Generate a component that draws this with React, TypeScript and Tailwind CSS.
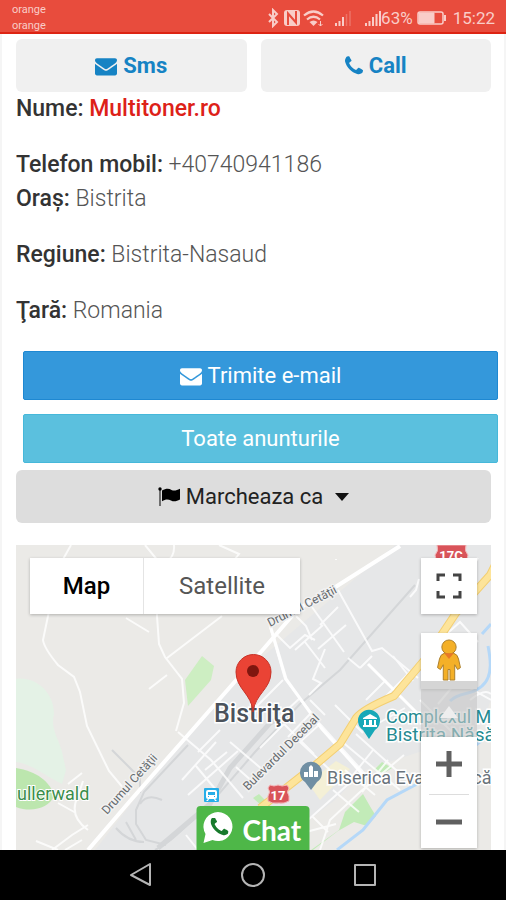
import type { ReactNode } from "react";

function EnvelopeIcon() {
  return (
    <svg viewBox="0 0 1792 1792" className="size-[22px] shrink-0" fill="currentColor" aria-hidden="true">
      <path d="M1792 710v794q0 66-47 113t-113 47h-1472q-66 0-113-47t-47-113v-794q44 49 101 87 362 246 497 345 57 42 92.5 65.5t94.5 48 110 24.5h2q51 0 110-24.5t94.5-48 92.5-65.5q170-123 498-345 57-39 100-87zm0-294q0 79-49 151t-122 123q-376 261-468 325-10 7-42.5 31t-54 38.5-52 32.5-57.5 27-50 9h-2q-23 0-50-9t-57.5-27-52-32.5-54-38.5-42.5-31q-91-64-262-182.5t-205-142.5q-62-42-117-115.5t-55-136.5q0-78 41.5-130t118.5-52h1472q65 0 112.5 47t47.5 113z" />
    </svg>
  );
}

const PHONE_PATH =
  "M1600 1240q0 27-10 70.5t-21 68.5q-21 50-122 106-94 51-186 51-27 0-53-3.5t-57.5-12.5-47-14.5-55.5-20.5-49-18q-98-35-175-83-127-79-264-216t-216-264q-48-77-83-175-3-9-18-49t-20.5-55.5-14.5-47-12.5-57.5-3.5-53q0-92 51-186 56-101 106-122 25-11 68.500-21t70.500-10q14 0 21 3 18 6 53 76 11 19 30 54t35 63.500 31 53.500q3 4 17.500 25t21.500 35.500 7 28.500q0 20-28.500 50t-62 55-62 53-28.500 46q0 9 5 22.500t8.500 20.500 14 24 11.500 19q76 137 174 235t235 174q2 1 19 11.500t24 14 20.500 8.500 22.500 5q18 0 46-28.500t53-62 55-62 50-28.500q14 0 28.500 7t35.500 21.500 25 17.500q25 15 53.500 31t63.500 35 54 30q70 35 76 53 3 7 3 21z";

function PhoneIcon() {
  return (
    <svg viewBox="192 0 1408 1792" className="h-6 w-[18px] shrink-0" fill="currentColor" aria-hidden="true">
      <path d={PHONE_PATH} />
    </svg>
  );
}

function FlagIcon() {
  return (
    <svg viewBox="0 0 22 22" className="size-[22px] shrink-0" fill="currentColor" aria-hidden="true">
      <circle cx="2" cy="3" r="1.700" />
      <path d="M1.500 3h1v17h-1z" />
      <path d="M4 4.500c4-2.400 7-2.300 9.500-.6 2.500 1.300 5 .6 8.500-1.200v10.800c-3.300 1.900-6.300 2.500-9 1-3-1.600-5.500-1.400-9 .7z" />
    </svg>
  );
}

function StatusBar() {
  return (
    <header className="flex h-[34px] items-center justify-between border-b-2 border-[#dd2413] bg-[#e84c3d] pr-[11px] pl-3 text-[#f9cdc8]">
      <div className="flex flex-col pt-1 text-[11px] leading-4">
        <span>orange</span>
        <span>orange</span>
      </div>
      <div className="flex items-center pt-1">
        <svg viewBox="0 0 114 20" className="h-5 w-[114px]" fill="none" stroke="currentColor" aria-hidden="true">
          <path d="M2 6l8 8-4 4V2l4 4-8 8" strokeWidth="2" />
          <rect x="17" y="2" width="16" height="16" rx="3" fill="currentColor" stroke="none" />
          <path d="M21 17V5.500l8 9V3" stroke="#e84c3d" strokeWidth="2" />
          <path d="M37 7.500q9.500-8 19 0M40 11.500q6.500-5.500 13 0" strokeWidth="2.200" />
          <path d="M42.500 14q4-3 8 0l-4 4z" fill="currentColor" stroke="none" />
          <path d="M53.500 13v5m-2-2l2 2 2-2" strokeWidth="1" />
          <path d="M69 18v-3M72.500 18v-5M76 18V9" strokeWidth="2" />
          <path d="M79.500 18V6M83 18V3" strokeWidth="1.500" opacity=".3" />
          <path d="M99 18v-3M102.500 18v-5M106 18V9M109.500 18V6M113 18V3" strokeWidth="2" />
        </svg>
        <span className="text-[17px] leading-5">63%</span>
        <svg viewBox="0 0 30 14" className="mr-1.5 ml-1 h-3.5 w-[30px]" fill="none" stroke="currentColor" aria-hidden="true">
          <rect x="1" y="1" width="25" height="12" rx="2" strokeWidth="1.500" />
          <path d="M2 2h15v10H2z" fill="currentColor" />
          <path d="M28 4v6" strokeWidth="2" />
        </svg>
        <time className="text-[17px] leading-5">15:22</time>
      </div>
    </header>
  );
}

function Field({ label, children }: { label: string; children: ReactNode }) {
  return (
    <div>
      <dt className="inline font-medium text-[#333333]">{label}:</dt>{" "}
      <dd className="inline">{children}</dd>
    </div>
  );
}

function MapDrawing() {
  return (
    <svg
      viewBox="16 545 475 305"
      preserveAspectRatio="xMidYMid slice"
      className="absolute inset-0 size-full font-['Roboto','Noto_Sans',sans-serif]"
      role="img"
      aria-label="Bistriţa"
    >
      <path d="M16 545h475v305H16z" fill="#ebeae7" />
      <path d="M95 850L185 735 235 680 395 545H491V700L455 790 330 850z" fill="#e6e7e8" />
      <path d="M270 850l65-50 30-30 60-20 66 20v80z" fill="#ebeae7" />
      <path d="M16 679c18-3 38 12 38 35-4 15 5 25 8 38l4 18-4 14c-20-10-30-20-46-22z" fill="#e4f2e6" />
      <path d="M16 768c20 3 35 14 38 28-5 12-22 17-38 11z" fill="#bce6ae" />
      <path d="M185 680l17-24 12 10-3 14-23 26z" fill="#cdeec2" />
      <path d="M311 850l28-20 6-18 18-18 8 14 5 8-9 10-13-4-16 9-25 19zM374 770l8-8 10 6-8 5zM253 798l6-4 8 8-5 4z" fill="#c2ebb8" />
      <path d="M308 783l28-22 14 8-30 31z" fill="#f4f0d6" />

      <g fill="none" stroke="#d4d6d8">
        <path d="M155 850c20-10 28-23 50-40l50-58 45-48 40-34 75-85" strokeWidth="2" />
        <path d="M158 848l52-44 20-36 40-45 20-10" strokeWidth="5" />
        <path d="M188 745l-44 47-8 18v14l10 16 20 5M112 750l28 28v15M162 800q-15-7-22 4M126 822l10 18M116 828q12 14 28 14" strokeWidth="2" />
      </g>

      <g fill="none" stroke="#ffffff" strokeWidth="2" strokeOpacity=".8">
        <path d="M71 545l-9 16-14 55-5 24q1 8 15 25l16 12 6 15 7 34 22 45 20 24" />
        <path d="M145 545l14 17-2 54 2 28 6 13 17 22 2 24-8 28M174 545q1 12-8 17M126 618l23 14M222 616l-55 42M149 689l18-14M219 545l20 9-8 10" />
        <path d="M52 850l20-15 16-10M36 841l22 9M88 830q-20-14-10-34l5-15M58 803l18 10M68 784l14-11M65 850l17-10" />
        <path d="M178 732l33 28 32 38M198 752l22-22M182 780l34-38M196 766l20 24M205 770l22-18M188 795l50-44" />
        <path d="M270 627l15 52 35 45 45 50M276 634l14 14 15-13 10 5M312 640l-6-14-10-10M295 650l28-25M305 642l20 26M312 607l32 45M336 559v1M320 625l18-18M346 625l-28 24M325 649l-12 30 8 4-12 12" />
        <path d="M338 590l34 61 10-3 36 30M348 658l12 10M360 668l12-12M393 656l20 25M411 671l-25 25M283 680l-30 30M300 698l-25 23M312 712l-24 25M386 680l-20 20M370 728l35-20M419 579l-3 11-6 7" />
        <path d="M230 742l33 28-10 12-17-15M260 748l24-24M284 724l30 30M320 724l-20 18 30 28M325 715l-15-15M335 705l28 28" />
        <path d="M320 850l10-30 30-28 44-37M308 820l45-40M340 740l60 50M356 734l50 45M345 770l30 25M333 790l26 22M306 832l30-8M312 816l16 16M373 750l-24 30M388 760l-26 32" />
        <path d="M440 640l20-18 18 20M455 680l36 20M438 704l25-30M420 700l40 40 31-5M464 582q8-14 14-24M470 700q15-12 21-6M186 835l12 15" />
      </g>
      <g fill="none" stroke="#ffffff">
        <path d="M88 850l42-49 72-82 58-66 38-44 39-23 63-40" strokeWidth="4" />
        <path d="M270 625l16 54 36 50 43 48M368 664l60 60" strokeWidth="3" />
      </g>

      <path d="M337 850l26-20 24-30 60-32 44-35M450 701c10-10 22-5 32-15 12-10 8-30 6-40M482 634l9-10" fill="none" stroke="#b5d8f8" strokeWidth="3" />
      <g fill="none" strokeLinejoin="round">
        <path d="M260 808l26-20 28-22 26-22 16-26q7-9 38-22l32-38 30-45 34-38 5-10" stroke="#f3cf72" strokeWidth="8" />
        <path d="M260 808l26-20 28-22 26-22 16-26q7-9 38-22l32-38 30-45 34-38 5-10" stroke="#fde49a" strokeWidth="6" />
      </g>

      <g fill="#656a6d" stroke="#f1f1f1" strokeWidth="3" paintOrder="stroke" fontSize="12">
        <text transform="translate(107 815) rotate(-48)">Drumul Cetăţii</text>
        <text transform="translate(270 627) rotate(-27)">Drumul Cetăţii</text>
        <text transform="translate(248 791) rotate(-45)">Bulevardul Decebal</text>
      </g>
      <text x="17" y="800" fontSize="18" fill="#3b8d4b" stroke="#ffffff" strokeWidth="2" paintOrder="stroke">ullerwald</text>

      <g stroke="#ffffff" strokeWidth="3" paintOrder="stroke" fontSize="18">
        <text x="386" y="723" fill="#258a91">Complexul Muzeal</text>
        <text x="386" y="741" fontSize="19" fill="#258a91">Bistrita Năsăud</text>
        <text x="327" y="784" fill="#69737b">Biserica Evanghelică</text>
      </g>

      <path d="M369 739l-6-9a11 11 0 1 1 12 0z" fill="#17a8b8" />
      <path d="M363 718l7-4 7 4v1h-14zm1 2h2v5h-2zm5 0h3v5h-3zm5 0h2v5h-2zm-11 5h14v2h-14z" fill="#ffffff" />
      <path d="M311 790l-6-8a11 11 0 1 1 12 0z" fill="#708fa3" />
      <path d="M304 772h4v5h-4zm5-5l2-2 2 2v10h-4zm5 4h4v6h-4z" fill="#ffffff" />
      <rect x="204" y="788" width="15" height="14" rx="1" fill="#27aee8" />
      <path d="M208 790h7q2 0 2 2v5q0 2-2 2l2 2h-2l-1-2h-5l-1 2h-2l2-2q-2 0-2-2v-5q0-2 2-2z" fill="#ffffff" />
      <path d="M208 792h7v3h-7zm0 4h1v1h-1zm6 0h1v1h-1z" fill="#27aee8" />
      <g fill="#d9545a" stroke="#f3b6b8" strokeWidth="1">
        <path d="M270 785q4 2 8 0 4 2 9 0l2 3q-3 4 0 8v5q-5 3-10 2-7 1-11-2v-5q3-4 0-8z" />
        <path d="M437 545h29q-2 6 2 10l-2 8h-29l-2-8q4-4 2-10z" />
      </g>
      <g fill="#ffffff" fontWeight="700" fontSize="13" textAnchor="middle">
        <text x="278" y="800">17</text>
        <text x="451" y="560">17C</text>
      </g>
      <text x="214" y="722" fontSize="25" fontWeight="500" fill="#4b525b" stroke="#ffffff" strokeWidth="3" paintOrder="stroke">Bistriţa</text>
      <path d="M253 712c-1-18-17-23-17-40a17 17 0 0 1 35 0c0 17-16 22-18 40z" fill="#ea4335" stroke="#c73328" strokeWidth="1" />
      <circle cx="253" cy="671" r="6" fill="#7f160f" />
    </svg>
  );
}

function LocationMap() {
  return (
    <section className="relative mt-[22px] min-h-[305px] flex-1 overflow-hidden">
      <MapDrawing />
      <div className="absolute top-[13px] left-3.5 flex h-14 bg-white text-2xl shadow-[0_1px_3px_rgba(0,0,0,0.25)]">
        <button type="button" className="w-[114px] border-r border-[#e4e4e4] font-medium text-black">Map</button>
        <button type="button" className="w-[156px] text-[#565656]">Satellite</button>
      </div>
      <div className="absolute top-[13px] right-3.5 flex w-14 flex-col">
        <button type="button" aria-label="Fullscreen" className="flex h-14 items-center justify-center bg-white shadow-[0_1px_3px_rgba(0,0,0,0.25)]">
          <svg viewBox="0 0 26 26" className="size-[26px]" fill="none" stroke="#444444" strokeWidth="3" aria-hidden="true">
            <path d="M2 8V2h7M17 2h7v6M24 18v6h-7M9 24H2v-6" />
          </svg>
        </button>
        <button type="button" aria-label="Street View" className="mt-[19px] flex h-14 items-start justify-center border-b-8 border-[#d5d5d5] bg-white pt-1.5 shadow-[0_1px_3px_rgba(0,0,0,0.25)]">
          <svg viewBox="0 0 26 44" className="h-[42px] w-[26px]" fill="#f4b028" stroke="#a97c28" strokeWidth="1" aria-hidden="true">
            <path d="M8 15q-4 1-5 6l-2 9 3 2 3-5v16h5V32h2v11h5V27l3 5 3-2-2-9q-1-5-5-6z" />
            <circle cx="13" cy="8.500" r="7.500" />
            <path d="M8 15h10l-5 6z" fill="#e87928" stroke="none" />
          </svg>
        </button>
        <div className="flex h-12 items-center justify-center bg-[#c6c6c6]/60">
          <svg viewBox="0 0 24 24" className="size-6" fill="#eeeeee" aria-hidden="true">
            <path d="M12 5l9 12H3z" />
          </svg>
        </div>
        <div className="flex h-[111px] flex-col items-center bg-white shadow-[0_1px_3px_rgba(0,0,0,0.25)]">
          <button type="button" aria-label="Zoom in" className="flex w-full flex-1 items-center justify-center pb-1">
            <svg viewBox="0 0 26 26" className="size-[26px]" fill="none" stroke="#606060" strokeWidth="5" aria-hidden="true">
              <path d="M13 0v26M0 13h26" />
            </svg>
          </button>
          <span className="h-px w-10 bg-[#dddddd]" />
          <button type="button" aria-label="Zoom out" className="flex w-full flex-1 items-center justify-center">
            <svg viewBox="0 0 26 26" className="size-[26px]" fill="none" stroke="#606060" strokeWidth="5" aria-hidden="true">
              <path d="M0 13h26" />
            </svg>
          </button>
        </div>
      </div>
    </section>
  );
}

function ChatButton() {
  return (
    <a
      href="#chat"
      className="absolute bottom-0 left-1/2 flex h-11 w-[113px] -translate-x-1/2 items-center gap-2 rounded-t bg-[#4eb748] pt-1 pl-1.5 font-['Lato','Noto_Sans',sans-serif] text-[28px] leading-8 font-bold text-white"
    >
      <svg viewBox="0 0 32 32" className="mb-1 size-8 shrink-0" aria-hidden="true">
        <path d="M1 31l2-9a14.500 14.500 0 1 1 7 6z" fill="#ffffff" />
        <svg x="8" y="6" width="18" height="18" viewBox="192 256 1408 1280">
          <path d={PHONE_PATH} fill="#177a2c" />
        </svg>
      </svg>
      Chat
    </a>
  );
}

function SystemNav() {
  return (
    <nav className="flex h-[50px] items-center justify-center gap-[88px] bg-black text-[#b5b5b5]">
      <button type="button" aria-label="Back">
        <svg viewBox="0 0 24 24" className="size-6" fill="none" stroke="currentColor" strokeWidth="2" strokeLinejoin="round" aria-hidden="true">
          <path d="M21 1v21L2 12z" />
        </svg>
      </button>
      <button type="button" aria-label="Home">
        <svg viewBox="0 0 24 24" className="size-6" fill="none" stroke="currentColor" strokeWidth="2" aria-hidden="true">
          <circle cx="12" cy="12" r="11" />
        </svg>
      </button>
      <button type="button" aria-label="Recent apps">
        <svg viewBox="0 0 24 24" className="size-6" fill="none" stroke="currentColor" strokeWidth="2" strokeLinejoin="round" aria-hidden="true">
          <path d="M2 2h20v20H2z" />
        </svg>
      </button>
    </nav>
  );
}

export default function App() {
  return (
    <div className="flex min-h-screen flex-col bg-white font-['Roboto','Noto_Sans',sans-serif]">
      <StatusBar />
      <main className="relative flex flex-1 flex-col border-x-2 border-[#f5f5f5] pt-[5px] pr-[13px] pl-3.5 text-[22px] leading-[34px] text-[#555555]">
        <div className="grid grid-cols-2 gap-3.5 font-bold text-[#1683c4]">
          <a href="sms:+40740941186" className="flex h-[53px] items-center justify-center gap-1.5 rounded-md bg-[#f0f0f0]">
            <EnvelopeIcon />
            Sms
          </a>
          <a href="tel:+40740941186" className="flex h-[53px] items-center justify-center gap-1.5 rounded-md bg-[#f0f0f0]">
            <PhoneIcon />
            Call
          </a>
        </div>

        <dl className="flex flex-col gap-[22px] text-[23px] font-light">
          <Field label="Nume">
            <a href="#profile" className="font-medium text-[#dd2118]">Multitoner.ro</a>
          </Field>
          <div>
            <Field label="Telefon mobil">+40740941186</Field>
            <Field label="Oraș">Bistrita</Field>
          </div>
          <Field label="Regiune">Bistrita-Nasaud</Field>
          <Field label="Ţară">Romania</Field>
        </dl>

        <div className="mt-[23px] -mr-[7px] ml-[7px] flex flex-col gap-3.5 text-white">
          <button type="button" className="flex h-[49px] items-center justify-center gap-1.5 rounded-xs border border-[#1e88d2] bg-[#3498db]">
            <EnvelopeIcon />
            Trimite e-mail
          </button>
          <button type="button" className="h-[49px] rounded-xs border border-[#46b8da] bg-[#5bc0de]">
            Toate anunturile
          </button>
        </div>
        <button type="button" aria-haspopup="menu" className="mt-[7px] flex h-[53px] shrink-0 items-center justify-center gap-1.5 rounded-md bg-[#dddddd] text-[#222222]">
          <span className="text-black"><FlagIcon /></span>
          Marcheaza ca
          <svg viewBox="0 0 14 8" className="ml-1.5 h-2 w-3.5" aria-hidden="true">
            <path d="M0 0h14L7 8z" fill="#111111" />
          </svg>
        </button>

        <LocationMap />
        <ChatButton />
      </main>
      <SystemNav />
    </div>
  );
}
